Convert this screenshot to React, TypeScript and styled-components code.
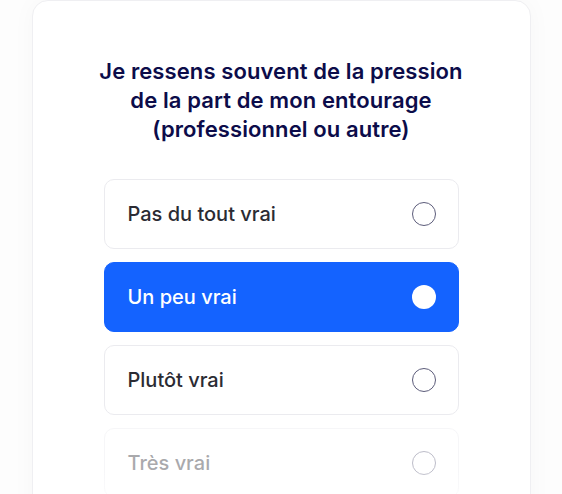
import React from "react";
import styled, { createGlobalStyle } from "styled-components";

const Global = createGlobalStyle`
	html, body {
		margin: 0;
		padding: 0;
		background: #ffffff;
		font-family: Inter, "Noto Sans", sans-serif;
	}
`;

const Stage = styled.div`
	width: 562px;
	height: 494px;
	overflow: hidden;
	display: flex;
	justify-content: center;
	background: #fdfdfd;
`;

const Card = styled.div`
	width: 499px;
	height: 540px;
	box-sizing: border-box;
	background: #ffffff;
	border: 1px solid #efeff2;
	border-radius: 16px;
	box-shadow: 0 0 24px rgba(20, 20, 60, 0.03);
	padding: 56px 0 0;
	display: flex;
	flex-direction: column;
	align-items: center;
	position: relative;
`;

const Question = styled.h1`
	margin: 0 0 35px;
	font-size: 22px;
	line-height: 29px;
	font-weight: 600;
	color: #0c0c4a;
	text-align: center;
	letter-spacing: 0.1px;
`;

const Options = styled.div`
	width: 355px;
	display: flex;
	flex-direction: column;
	gap: 13px;
`;

const Option = styled.div<{ $selected?: boolean; $faded?: boolean }>`
	height: 70px;
	box-sizing: border-box;
	border-radius: 10px;
	border: 1px solid ${(p) => (p.$selected ? "#1463ff" : "#ebebef")};
	background: ${(p) => (p.$selected ? "#1463ff" : "#ffffff")};
	display: flex;
	align-items: center;
	justify-content: space-between;
	padding: 0 22px 0 23px;
	opacity: ${(p) => (p.$faded ? 0.4 : 1)};
`;

const Label = styled.span<{ $selected?: boolean }>`
	font-size: 20px;
	font-weight: 500;
	color: ${(p) => (p.$selected ? "#ffffff" : "#2b2b33")};
`;

const Radio = styled.span<{ $selected?: boolean }>`
	width: 24px;
	height: 24px;
	box-sizing: border-box;
	border-radius: 50%;
	border: ${(p) => (p.$selected ? "none" : "1.5px solid #5c5c7a")};
	background: ${(p) => (p.$selected ? "#ffffff" : "transparent")};
`;

const Fade = styled.div`
	position: absolute;
	left: 0;
	right: 0;
	bottom: 0;
	height: 70px;
	background: linear-gradient(to bottom, rgba(255, 255, 255, 0), #ffffff 80%);
	pointer-events: none;
`;

const answers = ["Pas du tout vrai", "Un peu vrai", "Plutôt vrai", "Très vrai"];

export default function App() {
	const selected = 1;
	return (
		<>
			<Global />
			<Stage>
				<Card>
					<Question>
						Je ressens souvent de la pression
						<br />
						de la part de mon entourage
						<br />
						(professionnel ou autre)
					</Question>
					<Options>
						{answers.map((a, i) => (
							<Option key={a} $selected={i === selected} $faded={i === 3}>
								<Label $selected={i === selected}>{a}</Label>
								<Radio $selected={i === selected} />
							</Option>
						))}
					</Options>
					<Fade />
				</Card>
			</Stage>
		</>
	);
}
